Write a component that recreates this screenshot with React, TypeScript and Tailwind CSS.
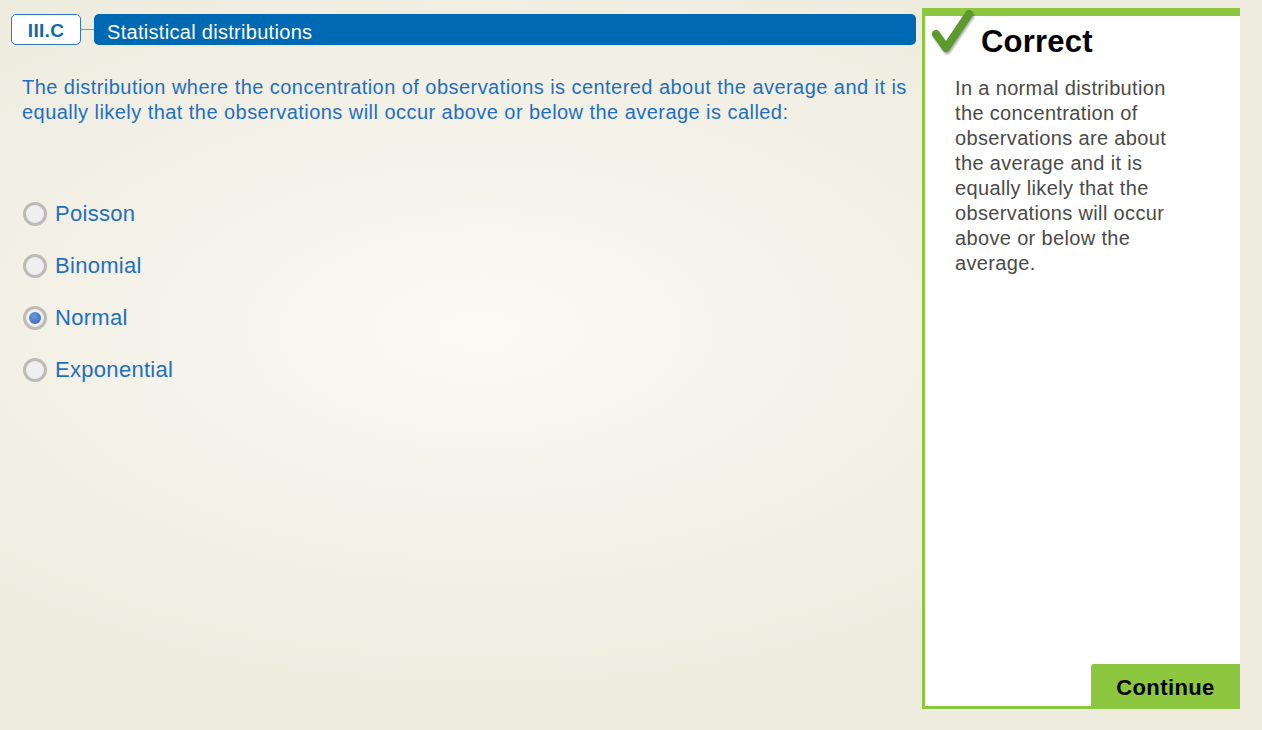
const options = ["Poisson", "Binomial", "Normal", "Exponential"];
const selected = "Normal";

function Radio({ checked }: { checked: boolean }) {
  return (
    <span className="flex h-[24px] w-[24px] items-center justify-center rounded-full border-[3px] border-[#bdbbb5] bg-[#efefef]">
      {checked && (
        <span className="h-[12px] w-[12px] rounded-full bg-[radial-gradient(circle_at_40%_35%,#6a9be0,#2d62b8)]" />
      )}
    </span>
  );
}

function CheckMark() {
  return (
    <svg width="44" height="46" viewBox="0 0 44 46" className="drop-shadow-[1px_2px_1px_rgba(0,0,0,0.35)]">
      <path
        d="M5 26 L15 40 L38 6"
        fill="none"
        stroke="#5c9a2b"
        strokeWidth="8"
        strokeLinecap="round"
        strokeLinejoin="round"
      />
    </svg>
  );
}

export default function App() {
  return (
    <div
      className="flex h-[730px] w-[1262px] bg-[radial-gradient(ellipse_at_480px_330px,#fbfaf5_0%,#f4f1e7_35%,#eeebdf_70%)]"
      style={{ fontFamily: '"Liberation Sans", Arial, sans-serif' }}
    >
      {/* Question side */}
      <div className="flex w-[922px] flex-col">
        {/* Header */}
        <div className="mt-[14px] flex items-center pl-[11px] pr-[6px]">
          <div className="flex h-[31px] w-[70px] items-center justify-center rounded-[5px] border border-[#2f78bd] bg-white pt-[4px] text-[19px] font-bold tracking-[0.3px] text-[#0a68b4]">
            III.C
          </div>
          <div className="h-px w-[13px] bg-[#6c9ac4]" />
          <div className="flex h-[31px] flex-1 items-center rounded-[5px] bg-[#0069b4] pl-[13px] pt-[4px] text-[20px] tracking-[0.3px] text-white">
            Statistical distributions
          </div>
        </div>

        {/* Question */}
        <p className="mt-[30px] pl-[22px] pr-[10px] text-[20px] leading-[25px] tracking-[0.45px] text-[#1f6fc1]">
          The distribution where the concentration of observations is centered about the average and it is
          equally likely that the observations will occur above or below the average is called:
        </p>

        {/* Options */}
        <div className="mt-[76px] flex flex-col gap-[27px] pl-[23px]">
          {options.map((opt) => (
            <label key={opt} className="flex h-[25px] items-center gap-[8px]">
              <Radio checked={opt === selected} />
              <span className="text-[22px] tracking-[0.3px] text-[#1f6fc1]">{opt}</span>
            </label>
          ))}
        </div>
      </div>

      {/* Feedback panel */}
      <div className="mt-[8px] flex h-[701px] w-[318px] flex-col border-t-[8px] border-b-[3px] border-l-[3px] border-[#8dc63f] bg-white">
        <div className="relative flex h-[56px] items-start">
          <div className="absolute left-[6px] top-[-8px]">
            <CheckMark />
          </div>
          <h2 className="ml-[56px] mt-[8px] text-[31px] font-bold leading-[36px] tracking-[0.2px] text-black">Correct</h2>
        </div>
        <p className="ml-[30px] mt-[4px] w-[220px] text-[20px] leading-[25px] tracking-[0.35px] text-[#4a4a4a]">
          In a normal distribution the concentration of observations are about the average and it is equally
          likely that the observations will occur above or below the average.
        </p>
        <div className="mt-auto flex justify-end">
          <button className="mb-[-3px] h-[45px] w-[149px] rounded-tl-[3px] bg-[#8dc63f] pt-[2px] text-[22px] font-bold tracking-[0.4px] text-black">
            Continue
          </button>
        </div>
      </div>
    </div>
  );
}
